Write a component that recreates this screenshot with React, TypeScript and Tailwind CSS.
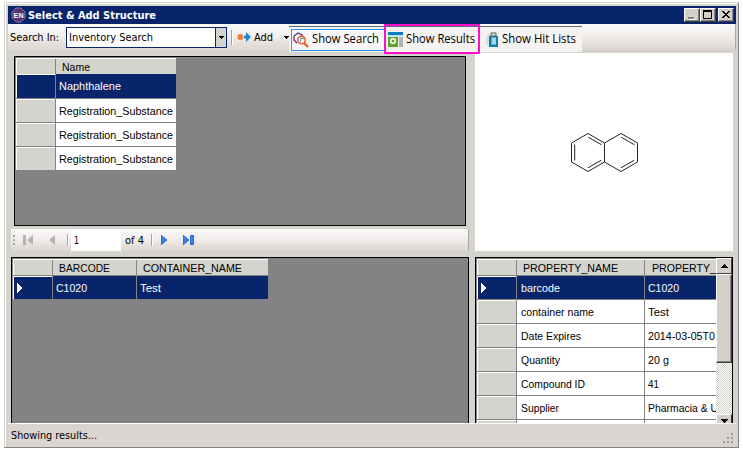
import React from 'react';

const sans = "font-['Liberation_Sans',Arial,sans-serif]";
const tahoma = "font-['DejaVu_Sans_Condensed','DejaVu_Sans',sans-serif]";

type LabelProps = { text: string; width: number; size?: number; face?: 'grid' | 'ui' | 'menu' | 'title'; color?: string; className?: string };

function Label({ text, width, size = 11, face = 'grid', color = '#000', className = '' }: LabelProps) {
  const family = face === 'grid' ? sans : face === 'menu' ? "font-['Open_Sans','Noto_Sans',sans-serif]" : face === 'title' ? "font-['DejaVu_Sans_Condensed','DejaVu_Sans',sans-serif] font-bold" : tahoma;
  return (
    <svg width={width} height="16" className={`block shrink-0 overflow-visible ${family} ${className}`}>
      <text x="0" y="12" fontSize={size} fill={color} textLength={width} lengthAdjust="spacingAndGlyphs">{text}</text>
    </svg>
  );
}

function Cap({ kind }: { kind: 'min' | 'max' | 'close' }) {
  return (
    <div className="h-[14px] w-4 border border-t-white border-l-white border-r-[#404040] border-b-[#404040] bg-[#d4d0c8]">
      <svg width="14" height="12" className="block" shapeRendering="crispEdges">
        <path d="M0 11.5H13.5V0" fill="none" stroke="#848284" />
        {kind === 'min' && <path d="M4 9h6v2H4z" fill="#fff" />}
        {kind === 'min' && <path d="M3 8h6v2H3z" fill="#848284" />}
        {kind === 'max' && <path d="M2 1h9v9H2zM3 3v6h7V3z" fill="#000" fillRule="evenodd" />}
        {kind === 'close' && <path d="M3 2h2v1h1v1h2V3h1V2h2v1h-1v1H9v1H8v1h1v1h1v1h1v1H9V8H8V7H6v1H5v1H3V8h1V7h1V6h1V5H5V4H4V3H3z" fill="#000" />}
      </svg>
    </div>
  );
}

function RowHead({ selected, arrow, width }: { selected?: boolean; arrow?: boolean; width: string }) {
  return (
    <div className={`${width} flex shrink-0 items-center border-t border-l border-white pl-[3px] ${selected ? 'bg-[#08246b]' : 'bg-[#d4d3cd]'}`}>
      {arrow && <svg width="6" height="10" shapeRendering="crispEdges"><path d="M0 0L5 5L0 10z" fill="#fff" /></svg>}
    </div>
  );
}

const properties: [string, number, string, number][] = [
  ['barcode', 39, 'C1020', 31],
  ['container name', 73, 'Test', 21],
  ['Date Expires', 60, '2014-03-05T0', 67],
  ['Quantity', 39, '20 g', 21],
  ['Compound ID', 64, '41', 11],
  ['Supplier', 38, 'Pharmacia & U', 70],
];

function ResultsGrid() {
  return (
    <div className="ml-[3px] mt-1 h-[170px] w-[452px] border border-black bg-[#848284] pt-px pl-px">
      <div className="flex h-4 w-[160px] bg-[#d4d3cd] border-t border-white">
        <div className="w-10 border-r border-[#848284] border-l border-l-white" />
        <Label text="Name" width={28} className="ml-[6px]" />
      </div>
      {['Naphthalene', 'Registration_Substance', 'Registration_Substance', 'Registration_Substance'].map((name, i) => (
        <div key={i} className={`flex w-[160px] ${i === 0 ? 'h-6' : 'h-6 border-t border-[#848284]'}`}>
          <RowHead selected={i === 0} width="w-[39px]" />
          <div className={`ml-px flex flex-1 items-center pl-[3px] ${i === 0 ? 'bg-[#08246b]' : 'bg-white'}`}>
            <Label text={name} width={i === 0 ? 62 : 114} color={i === 0 ? '#fff' : '#000'} />
          </div>
        </div>
      ))}
    </div>
  );
}

function PropertyGrid() {
  return (
    <div className="flex h-[166px] w-[258px] border border-b-0 border-black bg-white">
      <div className="w-[240px] overflow-hidden border-l border-t border-[#848284]">
        <div className="flex h-4 border-t border-white bg-[#d4d3cd]">
          <div className="w-10 shrink-0 border-l border-r border-l-white border-r-[#848284]" />
          <div className="w-[128px] shrink-0 pl-[6px] border-r border-[#848284]"><Label text="PROPERTY_NAME" width={95} size={11.5} /></div>
          <Label text="PROPERTY_" width={64} size={11.5} className="ml-[7px]" />
        </div>
        {properties.map(([name, nw, value, vw], i) => (
          <div key={name} className="flex h-6 border-t border-[#848284]">
            <RowHead selected={i === 0} arrow={i === 0} width="w-[39px]" />
            <div className={`flex w-[128px] shrink-0 items-center border-l border-[#848284] pl-1 ${i === 0 ? 'bg-[#08246b]' : ''}`}><Label text={name} width={nw} color={i === 0 ? '#fff' : '#000'} /></div>
            <div className={`flex flex-1 items-center border-l border-[#848284] pl-[3px] ${i === 0 ? 'bg-[#08246b]' : ''}`}><Label text={value} width={vw} color={i === 0 ? '#fff' : '#000'} /></div>
          </div>
        ))}
        <div className="flex h-1 border-t border-[#848284]"><RowHead width="w-[39px]" /><div className="w-[129px] border-x border-[#848284]" /></div>
      </div>
      <div className="flex w-4 flex-col bg-[repeating-conic-gradient(#fff_0_25%,#d4d0c8_0_50%)] bg-size-[2px_2px]">
        <div className="flex h-4 items-center justify-center border border-l-white border-t-white border-r-[#404040] border-b-[#404040] bg-[#d4d0c8]"><svg width="7" height="4" shapeRendering="crispEdges"><path d="M0 4L3.5 0L7 4z" /></svg></div>
        <div className="h-[89px] border border-l-white border-t-white border-r-[#404040] border-b-[#404040] bg-[#d4d0c8] shadow-[inset_-1px_-1px_#848284]" />
        <div className="mt-auto flex h-[9px] items-end justify-center border border-l-white border-t-white border-r-[#404040] border-b-0 bg-[#d4d0c8]"><svg width="7" height="4" shapeRendering="crispEdges"><path d="M0 0h7L4 4H3z" /></svg></div>
      </div>
    </div>
  );
}

function Toolbar() {
  return (
    <div className="flex h-[29px] items-start">
      <div className="relative flex h-[26px] w-[728px] shrink-0 items-center rounded-r-[2px] border-r border-[#aaa6a5] bg-linear-to-b from-[#fafafa] via-[#f0ecea] to-[#dcd4d0]">
        <Label text="Search In:" width={49} face="ui" className="ml-[2px]" />
        <div className="ml-[7px] flex h-[21px] w-[161px] items-center border border-[#08246b] bg-white pl-[2px]">
          <Label text="Inventory Search" width={84} face="ui" />
          <div className="ml-auto flex h-full w-[11px] items-center justify-center border-l border-[#08246b] bg-[#d4d3cd]"><svg width="5" height="3" shapeRendering="crispEdges"><path d="M0 0h5v1H4v1H3v1H2V2H1V1H0z" /></svg></div>
        </div>
        <div className="ml-1 h-[15px] w-[2px] border-l border-[#a5a2a5] border-r border-r-white" />
        <svg width="15" height="10" className="ml-[4px]"><circle cx="3.3" cy="5" r="3" fill="#f47b3c" /><path d="M7 3.5h2V0l5 5-5 5V6.5H7z" fill="#168bd2" /></svg>
        <Label text="Add" width={19} face="ui" className="ml-[2px]" />
        <svg width="5" height="3" shapeRendering="crispEdges" className="ml-[11px]"><path d="M0 0h5L3 3H2z" /></svg>
        <div className="absolute left-[281px] top-[2px] flex h-[26px] w-[293px] items-center border-t border-[#5f6878] bg-[#f5f2f2]">
          <div className="ml-[2px] flex h-[22px] w-[94px] shrink-0 items-center border border-[#3294f2] bg-[#f8f6f6] pl-px">
            <svg width="16" height="16" className="shrink-0">
              <path d="M4 11L1 8V4l4-3 4 2 1 2" fill="none" stroke="#52356b" strokeWidth="1.3" />
              <circle cx="8.5" cy="8" r="3.7" fill="#fff" stroke="#e65d20" strokeWidth="1.5" /><path d="M7 10l1-4 3 1" fill="none" stroke="#4785a9" /><path d="M11 11l4 4" stroke="#e65d20" strokeWidth="2.3" />
            </svg>
            <Label text="Show Search" width={67} size={12} face="menu" className="-mt-px ml-[3px]" />
          </div>
          <svg width="15" height="15" className="ml-[3px] shrink-0" shapeRendering="crispEdges"><path d="M0 0h15v3H0z" fill="#087fc4" /><path d="M0 3h15v2H0z" fill="#bfe7f4" /><path d="M0 5h10v10H0z" fill="#64a22e" /><path d="M11 5h4v10h-4z" fill="#b2b2b2" /><circle cx="5" cy="9" r="2.3" fill="none" stroke="#fff" strokeWidth="1.5" shapeRendering="auto" /></svg>
          <Label text="Show Results" width={69} size={12} face="menu" className="-mt-px ml-[3px]" />
          <svg width="12" height="15" className="ml-[11px] shrink-0"><path d="M1 4v9M3 2v11" stroke="#b5bcbb" strokeWidth=".8" /><path d="M3 4h9v11H3z" fill="#167cac" /><path d="M5 3V1h5v3H5z" fill="#d5dcda" stroke="#53665f" /><path d="M5 5h5v8H5z" fill="#3eb3e6" /><path d="M6 7h4M6 9h4M6 11h4" stroke="#fff" /></svg>
          <Label text="Show Hit Lists" width={74} size={12} face="menu" className="-mt-px ml-[4px]" />
        </div>
        <div className="absolute left-[376px] top-0 z-10 h-[30px] w-[96px] border-2 border-[#ff10c6]" />
      </div>
    </div>
  );
}

export default function App() {
  return (
    <div className="h-[451px] w-[743px] overflow-hidden bg-white pl-1 pt-[2px]">
      <div className="flex h-[446px] w-[735px] flex-col border-l border-t border-r border-b border-l-[#d4d3cd] border-t-[#d4d3cd] border-r-[#848284] border-b-[#848284] bg-[#d4d3cd]">
        <div className="flex min-h-0 flex-1 flex-col border-l border-t border-white pl-[2px] pt-[2px] pr-[2px]">
          <div className="flex h-[18px] w-[728px] shrink-0 items-center bg-[#08246b] pl-[3px] pr-[2px]">
            <svg width="15" height="16" className={`shrink-0 ${sans}`}><path d="M5 1h5l4 4v6l-4 4H5l-4-4V5z" fill="#51366f" stroke="#916ca6" /><text x="2.5" y="11" fontSize="7" fontWeight="bold" fill="#fff" textLength="10">EN</text></svg>
            <Label text="Select & Add Structure" width={128} face="title" color="#fff" className="-mt-px ml-[2px]" />
            <div className="ml-auto flex"><Cap kind="min" /><Cap kind="max" /><div className="ml-[2px]"><Cap kind="close" /></div></div>
          </div>
          <Toolbar />
          <div className="flex h-[198px] shrink-0 pl-[3px]">
            <div className="w-[464px] -mt-px">
              <ResultsGrid />
              <div className="mt-[3px] flex h-[22px] w-[458px] items-center rounded-r-[2px] border-r border-[#aaa6a5] bg-linear-to-b from-[#fafafa] via-[#f0ecea] to-[#dcd4d0]">
                <svg width="3" height="11" className="ml-[2px]" shapeRendering="crispEdges"><path d="M0 0h2v2H0zm0 4h2v2H0zm0 4h2v2H0z" fill="#aaa6a5" /></svg>
                <svg width="10" height="10" className="ml-[7px]"><path d="M0 0h3v10H0zM10 0v10L4 5z" fill="#b5b2b5" /></svg>
                <svg width="6" height="10" className="ml-[16px]"><path d="M6 0v10L0 5z" fill="#b5b2b5" /></svg>
                <div className="ml-[12px] h-3 w-[2px] border-l border-[#a5a2a5] border-r border-r-white" />
                <div className="ml-[2px] flex h-[21px] w-[50px] items-center bg-white pl-[3px]"><Label text="1" width={5} face="ui" /></div>
                <Label text="of 4" width={19} face="ui" className="ml-[4px]" />
                <div className="ml-[7px] h-3 w-[2px] border-l border-[#a5a2a5] border-r border-r-white" />
                <svg width="6" height="10" className="ml-[8px]"><path d="M0 0v10L6 5z" fill="#347ff1" stroke="#1751c8" strokeWidth=".7" /></svg>
                <svg width="11" height="10" className="ml-4"><path d="M0 0v10L6 5zM7.5 0h3v10h-3z" fill="#347ff1" stroke="#1751c8" strokeWidth=".7" /></svg>
              </div>
            </div>
            <div className="flex w-[258px] bg-white pl-[95px] pt-[79px]">
              <svg width="70" height="42" fill="none" stroke="#242424" strokeWidth="1"><path d="M1.5 11L18 1.5 34.5 11 51 1.5 67.5 11v19L51 39.5 34.5 30 18 39.5 1.5 30zM34.5 11v19M4.7 12.5v16M18.2 5.2L31.5 12.8M18 35.8L31.3 28.2M51.2 5.2L64.5 12.8M51 35.8L64.3 28.2" /></svg>
            </div>
          </div>
          <div className="flex h-[172px] shrink-0 pl-[3px] pt-[6px]">
            <div className="mr-[6px] h-[166px] w-[458px] border border-b-0 border-black bg-[#848284] pl-px pt-px">
              <div className="flex h-4 w-[255px] border-t border-white bg-[#d4d3cd]">
                <div className="w-10 border-l border-r border-l-white border-r-[#848284]" />
                <div className="w-[84px] border-r border-[#848284] pl-[6px]"><Label text="BARCODE" width={51} size={11.5} /></div>
                <Label text="CONTAINER_NAME" width={99} size={11.5} className="ml-[6px]" />
              </div>
              <div className="flex h-6 w-[255px] border-t border-[#848284]">
                <RowHead selected arrow width="w-[39px]" />
                <div className="ml-px flex w-[83px] items-center bg-[#08246b] pl-[3px]"><Label text="C1020" width={31} color="#fff" /></div>
                <div className="ml-px flex flex-1 items-center bg-[#08246b] pl-[3px]"><Label text="Test" width={21} color="#fff" /></div>
              </div>
            </div>
            <PropertyGrid />
          </div>
          <div className="flex min-h-0 flex-1 items-center border-t border-white bg-[#dad4d0] pl-[3px] pr-[2px]">
            <Label text="Showing results..." width={86} face="ui" className="-mt-[2px]" />
            <svg width="12" height="12" className="ml-auto mt-1" shapeRendering="crispEdges"><path d="M9 1h2v2H9zM5 5h2v2H5zm4 0h2v2H9zM1 9h2v2H1zm4 0h2v2H5zm4 0h2v2H9z" fill="#9c9896" /></svg>
          </div>
        </div>
      </div>
    </div>
  );
}
